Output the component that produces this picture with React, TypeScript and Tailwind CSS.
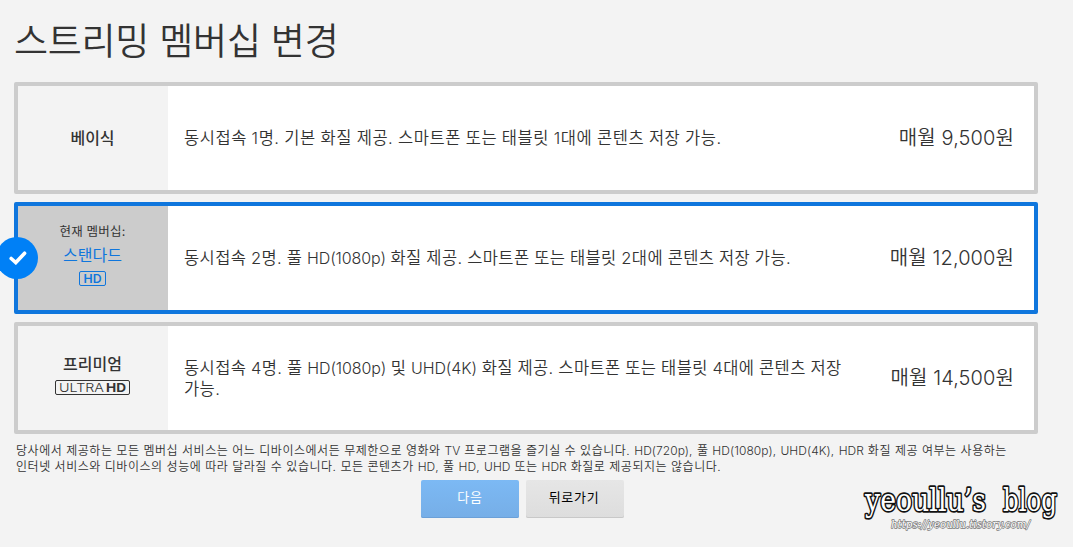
import { useState } from 'react';
import clsx from 'clsx';

const PLANS = [
    { id: 'basic', name: '베이식', lines: ['동시접속 1명. 기본 화질 제공. 스마트폰 또는 태블릿 1대에 콘텐츠 저장 가능.'], price: '매월 9,500원' },
    { id: 'standard', name: '스탠다드', lines: ['동시접속 2명. 풀 HD(1080p) 화질 제공. 스마트폰 또는 태블릿 2대에 콘텐츠 저장 가능.'], price: '매월 12,000원' },
    { id: 'premium', name: '프리미엄', lines: ['동시접속 4명. 풀 HD(1080p) 및 UHD(4K) 화질 제공. 스마트폰 또는 태블릿 4대에 콘텐츠 저장', '가능.'], price: '매월 14,500원' },
];

const NOTES = [
    '당사에서 제공하는 모든 멤버십 서비스는 어느 디바이스에서든 무제한으로 영화와 TV 프로그램을 즐기실 수 있습니다. HD(720p), 풀 HD(1080p), UHD(4K), HDR 화질 제공 여부는 사용하는',
    '인터넷 서비스와 디바이스의 성능에 따라 달라질 수 있습니다. 모든 콘텐츠가 HD, 풀 HD, UHD 또는 HDR 화질로 제공되지는 않습니다.',
];

const CURRENT = 'standard';

// Latin runs sit tighter than the Hangul around them
function Mixed({ text, latin }: { text: string; latin: string }) {
    return <>{text.split(/([A-Z][A-Za-z0-9()]+)/).map((t, i) => i % 2 ? <span key={i} className={latin}>{t}</span> : t)}</>;
}

function HdBadge() {
    return (
        <span className="mt-[5px] flex h-[15px] w-[27px] items-center justify-center rounded-[2px] border border-[#0f76dd]">
            <svg className="-my-1 shrink-0" width="19" height="19" fill="#0f76dd" fontSize="12" fontWeight="600">
                <text x="0.5" y="14" textLength="18" lengthAdjust="spacingAndGlyphs">HD</text>
            </svg>
        </span>
    );
}

function UltraHdBadge() {
    return (
        <span className="mt-[5px] flex h-[15px] w-[75px] items-center justify-center rounded-[2px] border border-[#333]">
            <svg className="-my-1 shrink-0" width="69" height="19" fill="#333" fontSize="12">
                <text x="1" y="14" fontWeight="350" textLength="45" lengthAdjust="spacingAndGlyphs">ULTRA</text>
                <text x="48" y="14" fontWeight="700" textLength="20" lengthAdjust="spacingAndGlyphs">HD</text>
            </svg>
        </span>
    );
}

export default function App() {
    const [selected, setSelected] = useState('standard');

    return (
        <div className="relative h-[547px] w-[1073px] overflow-hidden bg-[#f3f3f3] pt-[20px] pl-[14px] font-['Inter','Noto_Sans_CJK_KR',sans-serif] text-[#333]">
            <h1 className="h-[62px] text-[37px] leading-[44px] font-[350] tracking-[-0.25px] whitespace-nowrap">스트리밍 멤버십 변경</h1>

            <div className="flex w-[1024px] flex-col gap-2">
                {PLANS.map(p => {
                    const active = selected === p.id;
                    return (
                        <div key={p.id} onClick={() => setSelected(p.id)} className={clsx('relative flex h-[112px] cursor-pointer rounded-[2px] border-4 bg-white', active ? 'border-[#0f76dd]' : 'border-[#ccc]')}>
                            <div className={clsx('flex w-[150px] flex-col items-center justify-center pr-px', active ? 'bg-[#ccc]' : 'bg-[#f3f3f3]', p.id !== 'basic' && 'pb-[9px]')}>
                                {p.id === CURRENT && <span className="mb-[2px] text-[12.5px] leading-[20px] font-normal tracking-[0.2px]">현재 멤버십:</span>}
                                <span className={clsx('text-[16px] leading-[22px]', active ? 'font-normal text-[#0f76dd]' : 'font-medium')}>{p.name}</span>
                                {p.id === 'standard' && <HdBadge />}
                                {p.id === 'premium' && <UltraHdBadge />}
                            </div>
                            <div className="flex flex-1 items-center justify-between pr-5 pl-4 whitespace-nowrap">
                                <p className={clsx('text-[16.5px] leading-[21px] font-[350] [word-spacing:-0.4px]', p.id === 'basic' ? 'tracking-[0.53px]' : 'tracking-[0.4px]', p.lines.length > 1 && 'pt-[2px]')}>
                                    {p.lines.map(l => <span key={l} className="block"><Mixed text={l} latin="text-[16px] tracking-[-0.1px]" /></span>)}
                                </p>
                                <span className="text-[20px] font-[350] tracking-[0.1px]">{p.price}</span>
                            </div>
                            {active && (
                                <span className="absolute top-[31px] -left-[22px] flex size-[42px] items-center justify-center rounded-full bg-[#0080f6] pl-[2px]">
                                    <svg width="18" height="14" viewBox="0 0 18 14" fill="none" stroke="#fff" strokeWidth="3.6" strokeLinecap="round">
                                        <path d="M2.2 7.5 6.8 11.6 15.6 2.2" />
                                    </svg>
                                </span>
                            )}
                        </div>
                    );
                })}
            </div>

            <div className="mt-[9px] pl-[2px] text-[12px] leading-[16px] font-[350] tracking-[0.53px] whitespace-nowrap">
                {NOTES.map(n => <p key={n}><Mixed text={n} latin="tracking-[0.05px]" /></p>)}
            </div>

            <div className="mt-[5px] ml-[407px] flex gap-[7px] text-[13px] tracking-[0.7px]">
                <button className="h-[38px] w-[98px] rounded-[2px] bg-linear-to-b from-[#7cb9f4] to-[#76aee7] pb-[2px] text-white shadow-[inset_0_-1px_0_#6ba0d8]">다음</button>
                <button className="h-[38px] w-[98px] rounded-[2px] bg-linear-to-b from-[#e6e6e6] to-[#dddddd] pr-[2px] pb-[2px] text-black shadow-[inset_0_-1px_0_#c8c8c8]">뒤로가기</button>
            </div>

            {/* blog signature */}
            <svg className="absolute top-[475px] left-[855px]" width="218" height="65" fill="#fff" strokeLinejoin="round" fontFamily="'DejaVu Serif', serif" style={{ paintOrder: 'stroke' }}>
                <text x="10" y="36" fontSize="32" stroke="#111" strokeWidth="3.4" textLength="121" lengthAdjust="spacingAndGlyphs">yeoullu’s</text>
                <text x="148" y="36" fontSize="32" stroke="#111" strokeWidth="3.4" textLength="54" lengthAdjust="spacingAndGlyphs">blog</text>
                <text x="36" y="53" fontSize="11.5" fontStyle="italic" stroke="#777" strokeWidth="1.5" textLength="139" lengthAdjust="spacingAndGlyphs">https://yeoullu.tistory.com/</text>
            </svg>
        </div>
    );
}
